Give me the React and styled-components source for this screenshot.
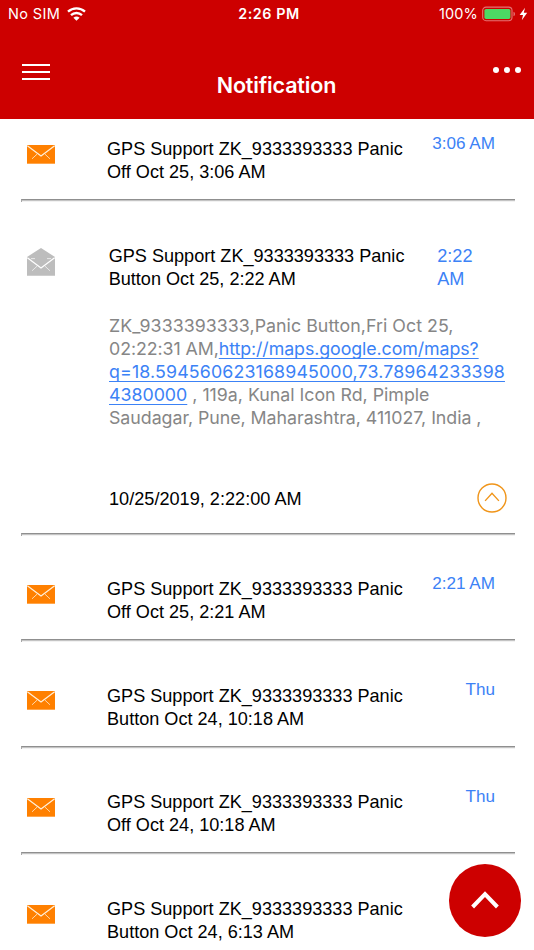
import React from 'react'
import styled, { createGlobalStyle } from 'styled-components'

const GlobalStyle = createGlobalStyle`
* { box-sizing: border-box; }
body {
  margin: 0;
  background: #fff;
  font-family: "Liberation Sans", Helvetica, sans-serif;
}
`;

const Screen = styled.div`
height: 950px;
overflow: hidden;
`;

const Header = styled.header`
height: 119px;
background: #cd0000;
color: #fff;
font-family: Inter, sans-serif;
`;

const StatusBar = styled.div`
display: grid;
grid-template-columns: 1fr auto 1fr;
align-items: center;
height: 27px;
padding: 0 6px 0 8px;
font-size: 14.5px;
`;

const Carrier = styled.div`
display: flex;
align-items: center;
gap: 7px;
letter-spacing: 0.35px;
`;

const Clock = styled.div`
padding-left: 2px;
font-weight: 600;
font-size: 14.3px;
letter-spacing: 0.6px;
`;

const Battery = styled.div`
display: flex;
align-items: center;
justify-content: flex-end;
letter-spacing: 0.15px;
svg { margin-left: 4px; }
`;

const NavBar = styled.div`
display: grid;
grid-template-columns: 1fr auto 1fr;
height: 92px;
padding: 0 13px 0 22px;
`;

const MenuButton = styled.button`
display: flex;
flex-direction: column;
gap: 5px;
width: 28px;
margin-top: 37px;
padding: 0;
border: none;
background: none;
height: max-content;
cursor: pointer;
`;

const MenuLine = styled.span`
height: 2px;
background: #fff;
`;

const Title = styled.h1`
margin: 43px 0 0 10px;
font-size: 21.5px;
font-weight: 600;
line-height: 30px;
letter-spacing: -0.15px;
`;

const MoreButton = styled.button`
display: flex;
gap: 5px;
justify-self: end;
margin-top: 40px;
padding: 0;
border: none;
background: none;
height: max-content;
cursor: pointer;
`;

const Dot = styled.span`
width: 6px;
height: 6px;
border-radius: 50%;
background: #fff;
`;

const List = styled.main`
height: 831px;
overflow: hidden;
`;

const Item = styled.article`
display: flex;
flex-direction: column;
margin: 0 19px 0 21px;
height: ${({ $open, $first }) => ($open ? '333.6px' : $first ? '83px' : '106.6px')};
padding-top: ${({ $open, $first }) => ($open ? '42px' : $first ? '18.3px' : '41.3px')};
`;

const Divider = styled.div`
flex: none;
height: 3px;
margin-top: auto;
border-top: 1px solid #8f8f8f;
border-left: 1px solid #a8a8a8;
background: linear-gradient(#c4c4c4 50%, #f2f2f2 50%);
`;

const Row = styled.div`
display: flex;
align-items: flex-start;
`;

const IconCell = styled.div`
width: ${({ $open }) => ($open ? '87.7px' : '86px')};
padding: ${({ $open }) => ($open ? '4px' : '8px')} 0 0 6px;
svg { display: block; }
`;

const Subject = styled.div`
width: 305px;
margin-top: 1.2px;
font-size: 18.1px;
line-height: 23px;
color: #000;
white-space: pre-line;
`;

const Time = styled.div`
margin-left: auto;
margin-right: 20px;
margin-top: -5px;
font-size: 17.1px;
line-height: 23px;
color: #3c82f6;
`;

const OpenTime = styled(Time)`
width: 40px;
margin: 1.2px 0 0 23.5px;
font-size: 18.15px;
line-height: 23px;
`;

const Body = styled.p`
margin: 22.4px 0 0 88px;
font-family: Inter, sans-serif;
font-size: 17.8px;
line-height: 23.2px;
color: #868686;
white-space: nowrap;
`;

const Line = styled.span`
display: block;
letter-spacing: ${({ $track }) => $track || 0}px;
`;

const Link = styled.a`
color: #3c82f6;
text-decoration: underline;
text-decoration-thickness: 1.4px;
text-decoration-skip-ink: none;
text-underline-offset: 2.5px;
`;

const Footer = styled.div`
display: flex;
align-items: center;
justify-content: space-between;
margin: 53.9px 8.5px 0 88px;
font-size: 18.15px;
svg { display: block; }
`;

const Received = styled.span`
padding-top: 2px;
`;

const ScrollTop = styled.button`
position: fixed;
right: 13px;
top: 864px;
display: flex;
align-items: center;
justify-content: center;
width: 72.5px;
height: 73px;
padding: 0 0 2px;
border: none;
border-radius: 50%;
background: #cd0000;
cursor: pointer;
`;

const WifiIcon = () => (
  <svg width="19" height="14" viewBox="0 0 19 14" fill="none" stroke="#fff" strokeWidth="2.3">
    <path d="M1 4.7a12.4 12.4 0 0 1 17 0" />
    <path d="M4 8.2a8 8 0 0 1 11 0" />
    <path d="M9.5 13.7 6.4 10.8a4.6 4.6 0 0 1 6.2 0z" fill="#fff" stroke="none" />
  </svg>
);

const BatteryIcon = () => (
  <svg width="46" height="16" viewBox="0 0 46 16">
    <rect x="0.7" y="1.1" width="29.3" height="13.6" rx="3.4" fill="none" stroke="#e57373" strokeWidth="1.1" />
    <rect x="2.4" y="2.9" width="26" height="10" rx="1.6" fill="#4cd964" />
    <path d="M31.5 5.8q1.5.4 1.5 2.2t-1.5 2.2z" fill="#e57373" />
    <path d="M43 1.8 37.6 8.9h3.4l-1.2 5.3 5.4-7.5h-3.4z" fill="#fff" />
  </svg>
);

const ClosedMail = () => (
  <svg width="28" height="19" viewBox="0 0 28 19" fill="none">
    <rect width="28" height="18.7" fill="#ff8000" />
    <path d="M.3 .7 14 11 27.7 .7" stroke="#fff0dc" strokeWidth="1.25" />
    <path d="m5 13.8 5-4.6M23 13.8l-5-4.6" stroke="#ffd7a8" strokeWidth="1" />
  </svg>
);

const OpenMail = () => (
  <svg width="28" height="28" viewBox="0 0 28 28" fill="none">
    <path d="M0 9 14 0l14 9v18.7H0z" fill="#bdbdbd" />
    <path d="M.3 9.7 14 20 27.7 9.7" stroke="#fff" strokeWidth="1.3" />
    <path d="m5 22.8 5-4.6M23 22.8l-5-4.6M4 10.6h4M24 10.6h-4" stroke="#e8e8e8" strokeWidth="1" />
  </svg>
);

const CollapseIcon = () => (
  <svg width="30" height="30" viewBox="0 0 30 30" fill="none" stroke="#f0951a" strokeWidth="1.4">
    <circle cx="15" cy="15" r="14" />
    <path d="m8.1 17.9 6.9-7.5 6.9 7.5" />
  </svg>
);

const notifications = [
  { subject: 'GPS Support ZK_9333393333 Panic\nOff Oct 25, 3:06 AM', time: '3:06 AM' },
  { subject: 'GPS Support ZK_9333393333 Panic\nButton Oct 25, 2:22 AM', time: '2:22 AM', open: true },
  { subject: 'GPS Support ZK_9333393333 Panic\nOff Oct 25, 2:21 AM', time: '2:21 AM' },
  { subject: 'GPS Support ZK_9333393333 Panic\nButton Oct 24, 10:18 AM', time: 'Thu' },
  { subject: 'GPS Support ZK_9333393333 Panic\nOff Oct 24, 10:18 AM', time: 'Thu' },
  { subject: 'GPS Support ZK_9333393333 Panic\nButton Oct 24, 6:13 AM', time: '' },
];

const Details = () => (
  <>
    <Body>
      <Line $track={0.04}>ZK_9333393333,Panic Button,Fri Oct 25,</Line>
      <Line $track={-0.08}>02:22:31 AM,<Link>http://maps.google.com/maps?</Link></Line>
      <Line $track={0.14}><Link>q=18.594560623168945000,73.78964233398</Link></Line>
      <Line $track={-0.01}><Link>4380000</Link> , 119a, Kunal Icon Rd, Pimple</Line>
      <Line $track={-0.04}>Saudagar, Pune, Maharashtra, 411027, India ,</Line>
    </Body>
    <Footer>
      <Received>10/25/2019, 2:22:00 AM</Received>
      <CollapseIcon />
    </Footer>
  </>
);

export default function App() {
  return (
    <Screen>
      <GlobalStyle />
      <Header>
        <StatusBar>
          <Carrier>No SIM <WifiIcon /></Carrier>
          <Clock>2:26 PM</Clock>
          <Battery>100% <BatteryIcon /></Battery>
        </StatusBar>
        <NavBar>
          <MenuButton>
            <MenuLine />
            <MenuLine />
            <MenuLine />
          </MenuButton>
          <Title>Notification</Title>
          <MoreButton>
            <Dot />
            <Dot />
            <Dot />
          </MoreButton>
        </NavBar>
      </Header>
      <List>
        {notifications.map((item, i) => (
          <Item key={item.subject} $first={i === 0} $open={item.open}>
            <Row>
              <IconCell $open={item.open}>{item.open ? <OpenMail /> : <ClosedMail />}</IconCell>
              <Subject>{item.subject}</Subject>
              {item.open ? <OpenTime>{item.time}</OpenTime> : <Time>{item.time}</Time>}
            </Row>
            {item.open && <Details />}
            <Divider />
          </Item>
        ))}
      </List>
      <ScrollTop>
        <svg width="28" height="18" viewBox="0 0 28 18" fill="none" stroke="#fff" strokeWidth="4">
          <path d="M1.6 16 14 3.2 26.4 16" />
        </svg>
      </ScrollTop>
    </Screen>
  )
}
